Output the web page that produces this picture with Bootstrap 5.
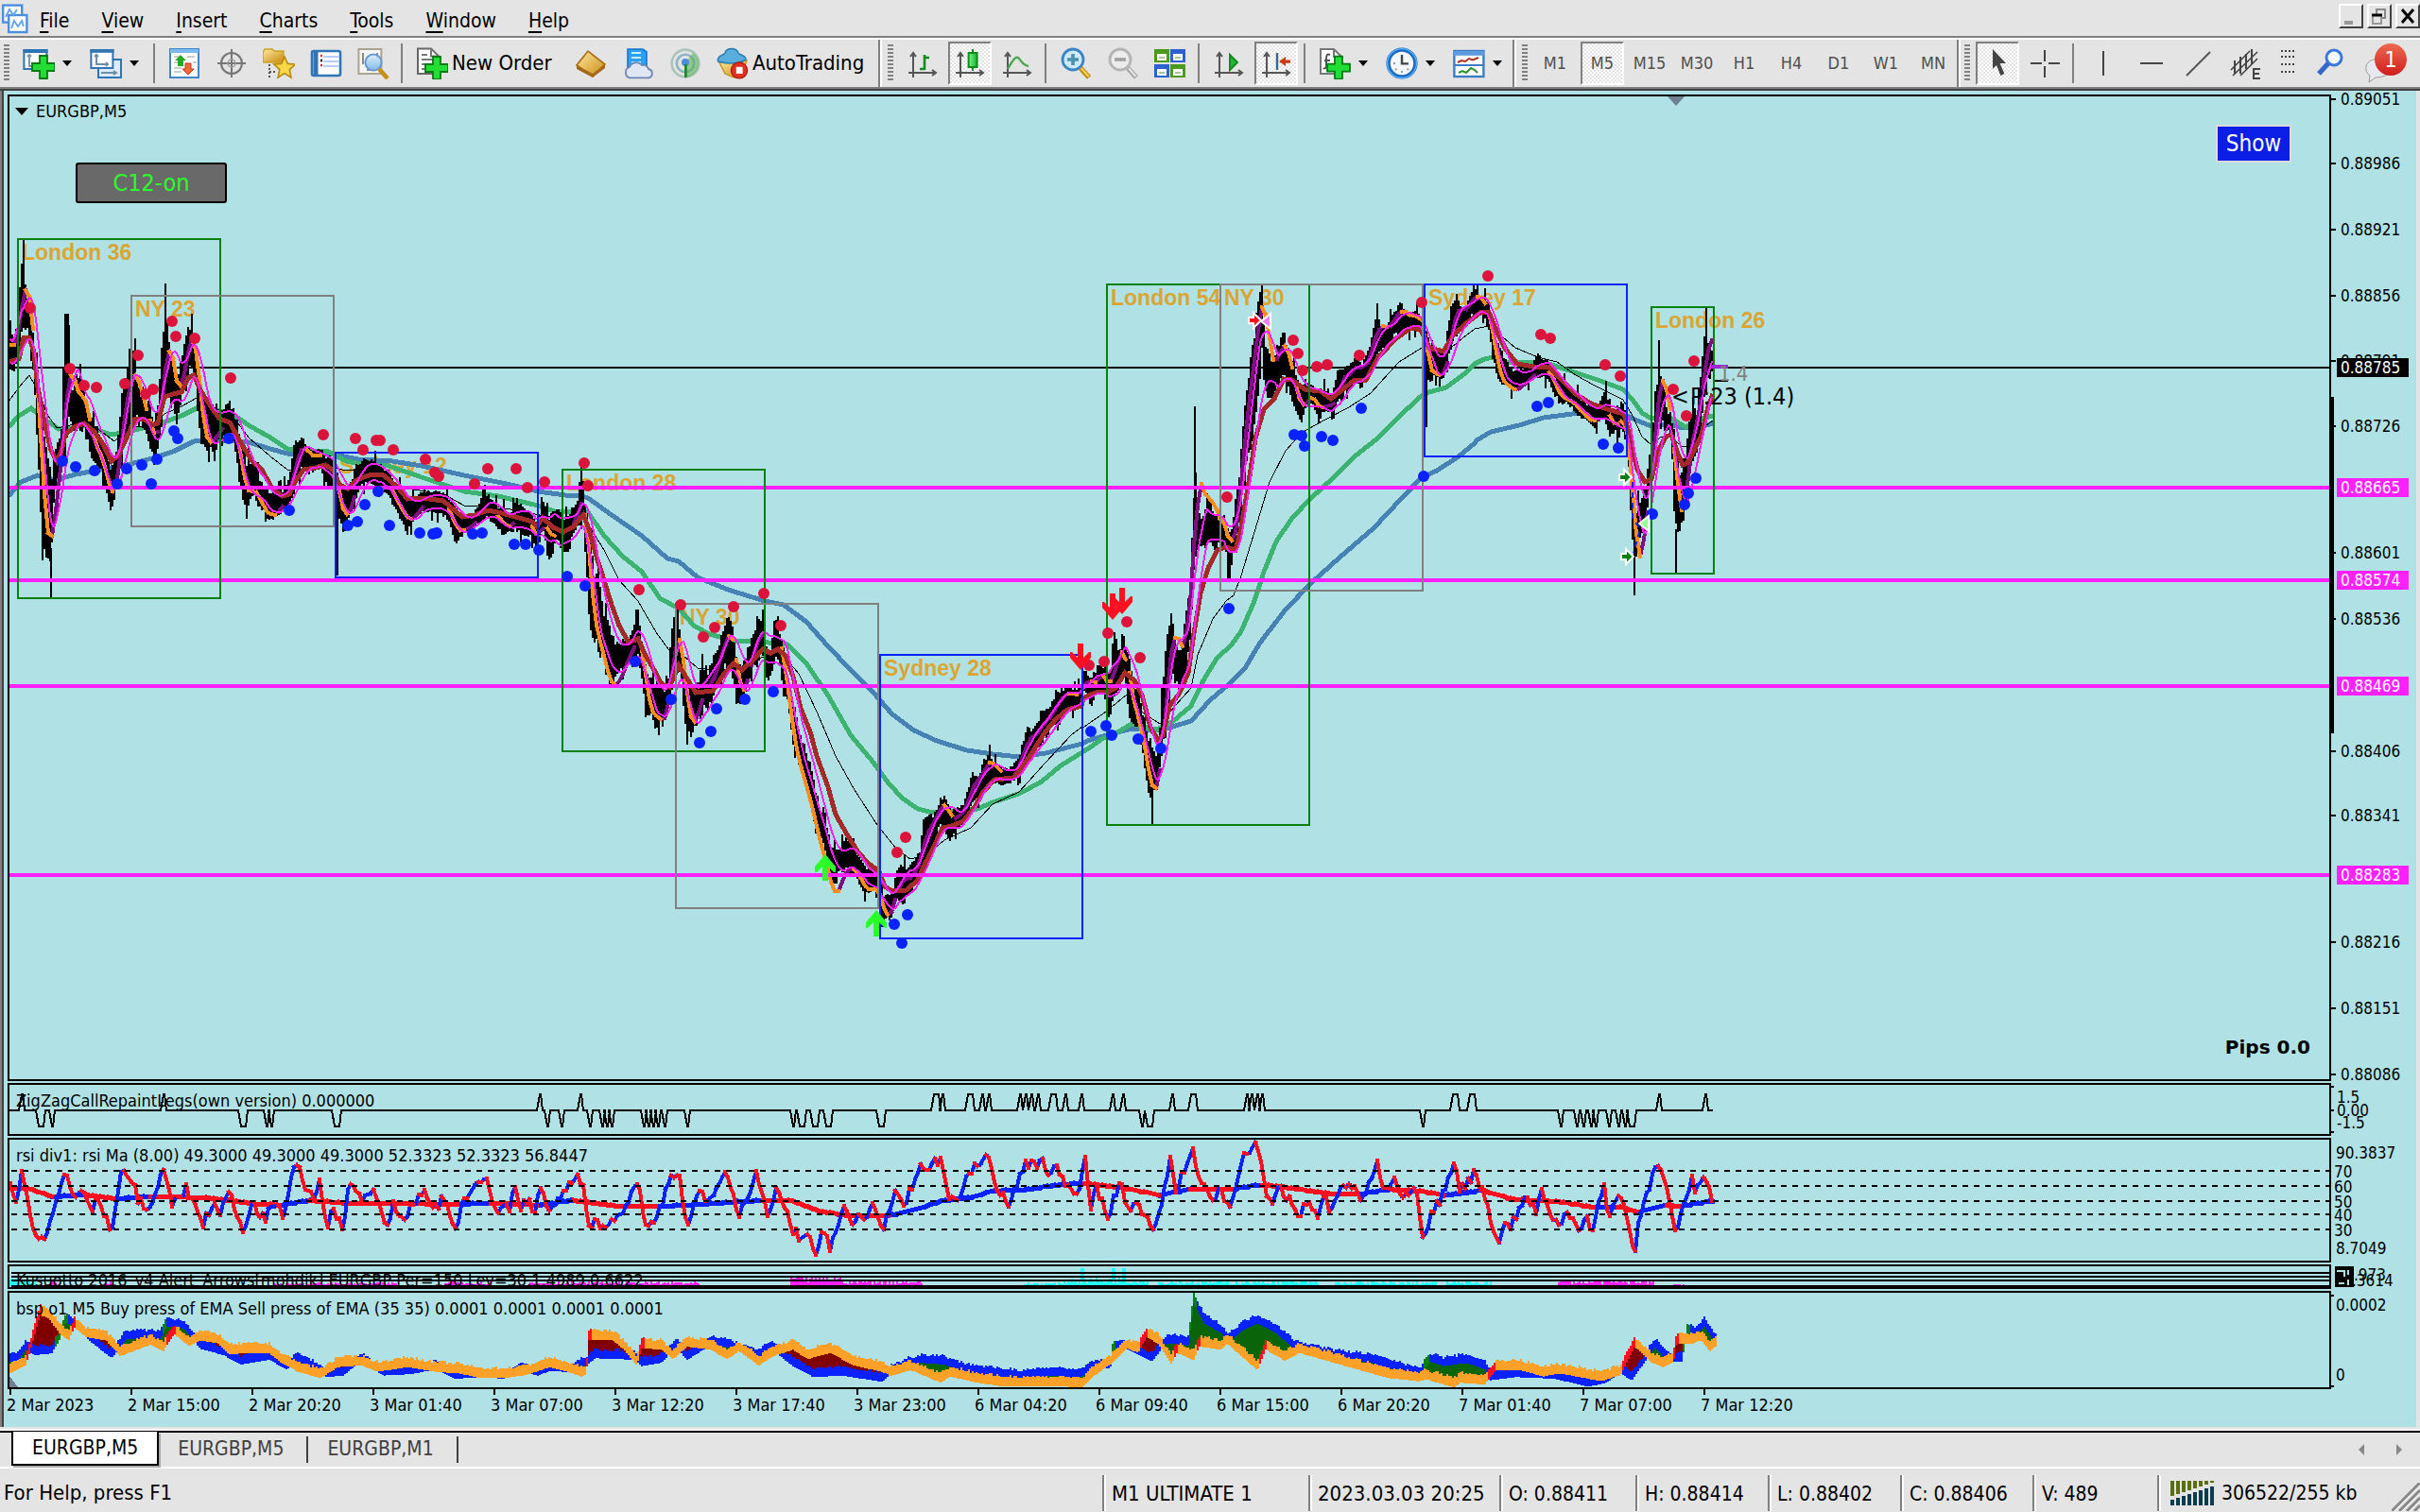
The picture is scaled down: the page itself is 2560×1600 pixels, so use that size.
<!DOCTYPE html>
<html lang="en">
<head>
<meta charset="utf-8">
<meta name="viewport" content="width=device-width, initial-scale=1">
<title>EURGBP,M5</title>
<link href="https://cdn.jsdelivr.net/npm/bootstrap@5.3.0/dist/css/bootstrap.min.css" rel="stylesheet">
<style>
:root{--face:#e4e4e4;--teal:#b0e2e5;--shade:#808080}
body{font-family:"DejaVu Sans Condensed","DejaVu Sans",sans-serif;font-size:21px;line-height:26px;color:#000;background:var(--face);overflow-x:hidden}
button{font:inherit;color:inherit;background:none;border:0;padding:0}
.menubar{height:40px;border-bottom:2px solid var(--shade)}
.menubar a{color:#000;text-decoration:none;padding:0 17px;line-height:44px}
.menubar a span{text-decoration:underline;text-underline-offset:4px;text-decoration-thickness:2px}
.appicon{margin-right:-5px}
.winbtn{width:26px;height:26px;border:2px solid;border-color:#fff #404040 #404040 #fff}
.toolbar{height:56px;border-top:2px solid #fff;border-bottom:2px solid #404040;box-shadow:inset 0 -2px var(--shade);padding-bottom:2px}
.band{border-right:2px solid var(--shade);box-shadow:2px 0 #fff;padding-left:6px;margin-right:2px}
.band:first-child{padding-left:4px}
.grip{width:6px;height:40px;margin-right:6px;background:repeating-linear-gradient(var(--shade) 0 2px,transparent 2px 4px)}
.tsep{width:2px;height:42px;margin:0 6px 0 4px;background:var(--shade)}
.tb{width:50px;height:46px;flex:none;display:flex;align-items:center;justify-content:center}
.tb svg{width:34px;height:34px}
.tb-menu{width:71px;justify-content:flex-start;padding-left:8px;gap:8px}
.tb-menu::after{content:"";border:5px solid transparent;border-top:6px solid #000;border-bottom:0}
.tb-text{width:auto;justify-content:flex-start;padding-left:8px;gap:4px;font-size:22px}
.tb-new{width:168px}.tb-auto{width:179px}
.tb-narrow{width:40px}
.tb-note{width:66px}.tb-note svg{width:50px;height:44px}
.tf{font-size:18px;color:#505050}
.pressed{width:46px;margin:0 2px;border:2px solid;border-color:var(--shade) #fff #fff var(--shade);background:repeating-conic-gradient(#fff 0 25%,#e4e4e4 0 50%) 0 0/4px 4px}
.chart{background:var(--teal);border-left:2px solid #404040;box-shadow:-2px 0 var(--shade);margin:0 4px 0 2px;padding:4px 0 0 4px}
.pane{margin-bottom:2px}
.plot{border:2px solid #000;min-width:0;position:relative}
.axis{width:90px;flex:none}
.pane-main{min-height:1044px}.pane-zz{height:56px}.pane-rsi{height:132px}.pane-ku{height:26px}.pane-bsp{height:104px;margin-bottom:0}.pane-time{height:40px;margin-left:-4px}
.plot svg,.axis svg,.pane-time svg{display:block;flex:1 1 0;min-width:0;width:100%;overflow:hidden}
.axis svg{overflow:visible}
.chart text{font-size:18px;fill:#000}
.axis text{font-size:17px}
.chart text.sess{font-family:"Liberation Sans",sans-serif;font-weight:700;font-size:23px;fill:#daa533}
.chart text.pips{font-family:"DejaVu Sans",sans-serif;font-weight:700;font-size:20px}
.chart text.tag{fill:#fff}
.chart text.note-s{font-size:22px;fill:#808080}.chart text.note-l{font-size:25px}
.btn-c12{position:absolute;left:70px;top:70px;width:160px;height:43px;background:#696969;border:2px solid #000;border-radius:3px;color:#2aff2a;font-size:25px}
.btn-show{position:absolute;right:40px;top:30px;width:80px;height:40px;background:#0a1ee6;border:2px solid #dcdcdc;color:#fff;font-size:24px}
.tabs{border-top:2px solid #000;box-shadow:0 -2px #fff;margin-top:4px;height:38px;padding-left:12px}
.tab{color:#404040;text-decoration:none;line-height:34px;height:34px;padding:0 20px;position:relative}
.tab+.tab{border-right:2px solid #404040;height:28px;margin-top:4px;line-height:26px;padding:0 24px 0 20px}
.tab-on{color:#000;background:#fff;border:2px solid #000;border-top:0;height:36px;margin-top:-1px;line-height:34px;box-shadow:2px 2px #aaa}
.scrolls{gap:34px;padding-right:19px}
.status{border-top:2px solid #fff;height:48px;padding-top:6px;font-size:22px}
.cell{border-left:2px solid var(--shade);box-shadow:inset 2px 0 #fff;padding-left:8px;height:38px;line-height:40px;flex:none;white-space:nowrap}
.w-a{width:218px}.w-b{width:202px}.w-c{width:144px}.w-d{width:140px}.w-e{width:132px}.w-f{width:278px}
.w-c,.w-d,.w-e,.w-f{font-size:21px}
</style>
<script src="https://cdn.jsdelivr.net/npm/bootstrap@5.3.0/dist/js/bootstrap.bundle.min.js"></script>
</head>
<body class="d-flex flex-column min-vh-100">
<svg width="0" height="0" class="position-absolute">
<defs>
<linearGradient id="gy" x1="0" y1="0" x2="1" y2="1"><stop offset="0" stop-color="#ffe9a0"/><stop offset="1" stop-color="#c98a10"/></linearGradient>
<linearGradient id="gb" x1="0" y1="0" x2="0" y2="1"><stop offset="0" stop-color="#d8efff"/><stop offset="1" stop-color="#6eb0e6"/></linearGradient>
<linearGradient id="gr" x1="0" y1="0" x2="0" y2="1"><stop offset="0" stop-color="#ee6a50"/><stop offset="1" stop-color="#d01c1c"/></linearGradient>
<linearGradient id="gg" x1="0" y1="0" x2="1" y2="0"><stop offset="0" stop-color="#7cf78c"/><stop offset="1" stop-color="#14b428"/></linearGradient>
<path id="plus" d="M4 0h4v4h4v4H8v4H4V8H0V4h4z" fill="#22dd33" stroke="#067a10" stroke-width=".9"/>
<g id="axes" fill="none" stroke="#555"><path d="M3.5 3v13M1 13.5h14M2 5l1.500-2L5 5M13.500 12l2 1.500-2 1.500"/></g>
</defs>
</svg>

<header>
<nav class="menubar d-flex align-items-start" aria-label="Main menu">
<svg width="30" height="32" viewBox="0 0 15 16" class="mt-1 appicon"><g fill="#fff" stroke="#4c8fe0" stroke-width="1.200"><rect x="1.600" y=".8" width="10" height="9"/><rect x="4.600" y="6" width="9.600" height="9"/></g><path d="M3 7l2-4 2 3 2-3M6 13l1.500-4 2 3 2-3 1 3" fill="none" stroke="#6aa5ea"/></svg>
<a href="#"><span>F</span>ile</a><a href="#"><span>V</span>iew</a><a href="#"><span>I</span>nsert</a><a href="#"><span>C</span>harts</a><a href="#"><span>T</span>ools</a><a href="#"><span>W</span>indow</a><a href="#"><span>H</span>elp</a>
<div class="ms-auto d-flex gap-1 mt-1">
<button class="winbtn d-flex" aria-label="Minimize"><svg width="22" height="22"><path d="M4 18h9" stroke="#999" stroke-width="4"/></svg></button>
<button class="winbtn d-flex" aria-label="Restore"><svg width="22" height="22" fill="none"><path d="M8 9V4h9v9h-4" stroke="#888" stroke-width="2"/><path d="M4 10h10M4 10v9h9v-9" stroke="#999" stroke-width="2"/><path d="M3 10h11" stroke="#000" stroke-width="3"/></svg></button>
<button class="winbtn d-flex" aria-label="Close"><svg width="22" height="22"><path d="M5 4l12 14M17 4L5 18" stroke="#000" stroke-width="3"/></svg></button>
</div>
</nav>
<div class="toolbar d-flex" role="toolbar" aria-label="Toolbar">
<div class="band d-flex align-items-center">
<span class="grip"></span>
<button class="tb tb-menu" aria-label="New chart"><svg viewBox="0 0 17 17"><rect x=".7" y="1.500" width="12" height="10" fill="#fff" stroke="#2f74b5"/><path d="M.3 2h13" stroke="#2f74b5" stroke-width="2"/><path d="M3.500 4v6h3M2.500 5l1-1 1 1" stroke="#7a96b0" fill="none"/><use href="#plus" transform="translate(5 4.500)"/></svg></button>
<button class="tb tb-menu" aria-label="Profiles"><svg viewBox="0 0 17 17"><rect x="4.500" y="6.500" width="12" height="9.500" fill="#dcecfa" stroke="#2f74b5"/><rect x=".7" y="1.500" width="11.500" height="9.500" fill="#fff" stroke="#2f74b5"/><path d="M.3 2h12.500" stroke="#2f74b5" stroke-width="1.800"/><path d="M3.500 4v5h6M2.500 5l1-1 1 1M8.500 8l1 1-1 1M6 13.500h8M12.500 12.500l1.500 1-1.500 1" stroke="#6f8ea8" fill="none"/></svg></button>
<span class="tsep"></span>
<button class="tb" aria-label="Market Watch"><svg viewBox="0 0 17 17"><rect x="1" y="1" width="15" height="15" fill="#fff" stroke="#3f86cc"/><path d="M1 2h15" stroke="#7db8ee" stroke-width="2"/><path d="M3 5h4M3 8h3M10 5h4M3 11h4M3 13h4M13 8h2" stroke="#ccc"/><path d="M6.500 4l3 3H8v3H5V7H3.500z" fill="#28a828"/><path d="M10.500 14.500l3-3H12v-3H9v3H7.500z" fill="#f06a40" stroke="#c03810" stroke-width=".5"/></svg></button>
<button class="tb" aria-label="Data window"><svg viewBox="0 0 17 17" fill="none" stroke="#777"><circle cx="8.500" cy="8.500" r="5.500" stroke-width="1.100"/><path d="M8.500 1v15M1 8.500h15" stroke-width="1"/><circle cx="8.500" cy="8.500" r="2" stroke="#999" stroke-width=".7"/></svg></button>
<button class="tb" aria-label="Navigator"><svg viewBox="0 0 17 17"><path d="M0 3l1-2h4l1 1h5v6H0z" fill="url(#gy)" stroke="#c9a224" stroke-width=".7"/><path d="M3.500 9v7M3.500 13h3" stroke="#555" stroke-dasharray="1 1"/><path d="M11.500 5l1.700 3.700 4 .3-3 2.800.8 4.200-3.500-2.200L8 16l.9-4.200-3-2.800 4-.3z" fill="#f8d84a" stroke="#b98a10" stroke-width=".8"/></svg></button>
<button class="tb" aria-label="Terminal"><svg viewBox="0 0 17 17"><rect x="1" y="2" width="15" height="13" rx="1" fill="#fff" stroke="#2f74b5" stroke-width="1.300"/><path d="M3 2.500v12" stroke="#2f74b5" stroke-width="2.500"/><path d="M7 5h8M7 7.500h8M7 10h8" stroke="#b8ccff" stroke-width="1"/><path d="M5.500 4.500h1M5.500 9.500h1" stroke="#e22" stroke-width="1.200"/><path d="M5.500 7h1" stroke="#000" stroke-width="1.200"/></svg></button>
<button class="tb" aria-label="Strategy tester"><svg viewBox="0 0 17 17"><path d="M.7 1h12v13H.7z" fill="#f6f6f2" stroke="#aaa490"/><path d="M3 3v6M10.500 3v3M5 12h5" stroke="#888"/><circle cx="8.500" cy="8" r="4.300" fill="url(#gb)" fill-opacity=".85" stroke="#6a9ad0"/><path d="M11.500 11.500l4.500 5" stroke="#c49018" stroke-width="2.300"/></svg></button>
<span class="tsep"></span>
<button class="tb tb-text tb-new"><svg viewBox="0 0 17 17"><path d="M1 .7h7l4 4V14H1z" fill="#fff" stroke="#666"/><path d="M8 .7v4h4M3 4h3M3 6.500h6M3 9h5M3 11.500h3" fill="none" stroke="#777"/><use href="#plus" transform="translate(5 5)"/></svg>New Order</button>
<button class="tb" aria-label="MetaEditor"><svg viewBox="0 0 17 17"><path d="M1 9.500L7 2l9 7-6.500 6.500z" fill="url(#gy)" stroke="#a86a10" stroke-width=".8"/><path d="M1 9.500l8.500 4.500L16 9v2l-6.500 5L1 11.500z" fill="#a5691a"/></svg></button>
<button class="tb" aria-label="Cloud"><svg viewBox="0 0 17 17"><path d="M3 1h8l2 1.500V11H3z" fill="#2ca0f4" stroke="#1676cc" stroke-width=".8"/><path d="M5 3h5M5 5.500h5M5 8h5" stroke="#c8ecff"/><path d="M4 16.200a3 3 0 010-5.700 3.800 3.800 0 016.500-1 3 3 0 013.500 2 2.400 2.400 0 010 4.700z" fill="#dfe6f4" stroke="#6f86b4" stroke-width=".9"/></svg></button>
<button class="tb" aria-label="Signals"><svg viewBox="0 0 17 17" fill="none"><circle cx="8.500" cy="8.500" r="7.200" stroke="#a9c4b8" stroke-width="1.300"/><circle cx="8.500" cy="8.500" r="4.600" stroke="#8fb4c8" stroke-width="1.300"/><path d="M8.500 8.500V16a7.500 7.500 0 007-7.500 7 7 0 00-3-5.500z" fill="#5ab45a" fill-opacity=".6"/><circle cx="8.500" cy="8" r="2" fill="#4c8cd8"/><path d="M8.700 9v7" stroke="#1c8a2c" stroke-width="1.400"/></svg></button>
<button class="tb tb-text tb-auto"><svg viewBox="0 0 17 17"><path d="M1 7h15l-3 7.500-4 1.500-4.500-2z" fill="url(#gy)" stroke="#c79a20" stroke-width=".8"/><path d="M.8 7.500C0 4 4 4.500 4.500 3c.8-3 6-3 7 0 .5 1.200 4 1 4 3.500-4 2.500-10 2.500-14.700 1z" fill="#5aaede" stroke="#2c7eb0" stroke-width=".8"/><circle cx="12" cy="12.200" r="4.300" fill="#e03020" stroke="#b01810" stroke-width=".6"/><rect x="10.400" y="10.400" width="3.400" height="3.600" fill="#fff"/></svg>AutoTrading</button>
</div>
<div class="band d-flex align-items-center">
<span class="grip"></span>
<button class="tb" aria-label="Bar chart"><svg viewBox="0 0 17 17"><use href="#axes"/><path d="M9.500 4v8M7 11.500h2.500M9.500 5.500H12" stroke="#128a1c" stroke-width="1.300" fill="none"/></svg></button>
<button class="tb pressed" aria-label="Candlesticks"><svg viewBox="0 0 17 17"><use href="#axes"/><path d="M10 1v11.500" stroke="#128a1c"/><rect x="7.800" y="3" width="4.500" height="7.500" fill="url(#gg)" stroke="#128a1c"/></svg></button>
<button class="tb" aria-label="Line chart"><svg viewBox="0 0 17 17"><use href="#axes"/><path d="M3.500 11.500C6 7 8 4 9.500 6c1.500 2 2.500 3.500 5 4" stroke="#4ca852" stroke-width="1.200" fill="none"/></svg></button>
<span class="tsep"></span>
<button class="tb" aria-label="Zoom in"><svg viewBox="0 0 17 17"><circle cx="7" cy="6.500" r="5.500" fill="#cdeafa" stroke="#3c84c8" stroke-width="1.400"/><path d="M7 3.500v6M4 6.500h6" stroke="#4c90b4" stroke-width="1.800"/><path d="M11 11l4.500 5" stroke="#c49018" stroke-width="2.800"/><path d="M11.500 11.200l3.800 4.200" stroke="#f4d860" stroke-width="1"/></svg></button>
<button class="tb" aria-label="Zoom out"><svg viewBox="0 0 17 17"><circle cx="7" cy="6.500" r="5.500" fill="#ececec" stroke="#b4b4b4" stroke-width="1.400"/><path d="M4 6.500h6" stroke="#a0a0a0" stroke-width="1.800"/><path d="M11 11l4.500 5" stroke="#a8a8a8" stroke-width="2.600"/><path d="M11.500 11.200l3.800 4.200" stroke="#e8e8e8" stroke-width="1"/></svg></button>
<button class="tb" aria-label="Tile windows"><svg viewBox="0 0 17 17"><path d="M0 1h8v7H0zM8.500 9h8v7h-8z" fill="#4c9a1c"/><path d="M8.500 1h8v7h-8zM0 9h8v7H0z" fill="#2c62d0"/><path d="M1.500 3.500h5v3.500h-5zM10 3.500h5v3.500h-5zM1.500 11.500h5V15h-5zM10 11.500h5V15h-5z" fill="#fff"/><path d="M2.500 5.500h3M11 5.500h3M2.500 13.500h3M11 13.500h3" stroke="#a8c0a0"/></svg></button>
<span class="tsep"></span>
<button class="tb" aria-label="Auto scroll"><svg viewBox="0 0 17 17"><use href="#axes"/><path d="M9 4l4 4-4 4z" fill="#22b832" stroke="#128a1c"/></svg></button>
<button class="tb pressed" aria-label="Chart shift"><svg viewBox="0 0 17 17"><use href="#axes"/><path d="M9 3v9" stroke="#2c6c9c" stroke-width="1.200"/><path d="M10 7.500l3.500-2.500v1.700H16v1.700h-2.500V10z" fill="#c83c14"/></svg></button>
<span class="tsep"></span>
<button class="tb tb-menu" aria-label="Indicators"><svg viewBox="0 0 17 17"><path d="M1 1h7l4 4v9H1z" fill="#fff" stroke="#777"/><path d="M8 1v4h4" fill="none" stroke="#777"/><path d="M6 4c-2-1-2 1-2 3v3c0 1-1 1.500-1.500 1M3 7h3" stroke="#555" fill="none"/><use href="#plus" transform="translate(4.500 4.800)"/></svg></button>
<button class="tb tb-menu" aria-label="Periods"><svg viewBox="0 0 17 17"><circle cx="8.500" cy="8.500" r="7.200" fill="#f4f8fc" stroke="#1c6cc4" stroke-width="2.200"/><circle cx="8.500" cy="8.500" r="7.700" fill="none" stroke="#58b0f4" stroke-width=".7"/><path d="M8.500 4v4.700H12" stroke="#444" fill="none" stroke-width="1.200"/><path d="M8.500 12.500v1M4 8.500h1M5 12l.7-.7M12 12l-.7-.7" stroke="#999"/></svg></button>
<button class="tb tb-menu" aria-label="Templates"><svg viewBox="0 0 17 17"><rect x=".7" y="2" width="15.500" height="13.500" fill="#fff" stroke="#3c7cc4" stroke-width="1.200"/><path d="M.5 3.200h16" stroke="#5c9ade" stroke-width="2.400"/><path d="M.7 9.500h15.500" stroke="#3c7cc4"/><path d="M2.500 8l2-1 2 .5 2-1.500 2 .7 3-1.200" stroke="#a83020" fill="none"/><path d="M3 13.500l2-1 2 1 2.500-2.500 2 1 1.500 1.500" stroke="#28922c" fill="none"/></svg></button>
</div>
<div class="band d-flex align-items-center">
<span class="grip me-1"></span>
<button class="tb tf">M1</button><button class="tb tf pressed">M5</button><button class="tb tf">M15</button><button class="tb tf">M30</button><button class="tb tf">H1</button><button class="tb tf">H4</button><button class="tb tf">D1</button><button class="tb tf">W1</button><button class="tb tf">MN</button>
</div>
<div class="d-flex align-items-center ps-1">
<span class="grip me-1"></span>
<button class="tb pressed" aria-label="Cursor"><svg viewBox="0 0 17 17"><path d="M6 1l7 7.500H9.800l2.400 5.500-2 1L8 9.500 6 11.500z" fill="#444"/></svg></button>
<button class="tb" aria-label="Crosshair"><svg viewBox="0 0 17 17"><path d="M8.500 1.500v6M8.500 10v6M1 8.500h6M10.500 8.500h6" stroke="#444"/></svg></button>
<span class="tsep"></span>
<button class="tb" aria-label="Vertical line"><svg viewBox="0 0 17 17"><path d="M8.500 2v13" stroke="#444"/></svg></button>
<button class="tb" aria-label="Horizontal line"><svg viewBox="0 0 17 17"><path d="M3 8.500h12" stroke="#444"/></svg></button>
<button class="tb" aria-label="Trendline"><svg viewBox="0 0 17 17"><path d="M2.500 15L15 2.500" stroke="#555"/></svg></button>
<button class="tb" aria-label="Equidistant channel"><svg viewBox="0 0 17 17" fill="none" stroke="#444"><path d="M1 12L11 2M2 15L15 2.500M6 15l9-9" stroke-width=".8"/><path d="M3 7v7M6 5v9M9 3.500v8M12 1v8" stroke-width="1"/><path d="M16.500 11.500H13v5h3.500M13 14h3"/></svg></button>
<button class="tb tb-narrow" aria-label="Fibonacci"><svg viewBox="0 0 17 17"><path d="M5 2h7M5 5h7M5 9h7M5 13h7" stroke="#444" stroke-dasharray="1 1"/></svg></button>
<button class="tb" aria-label="Search"><svg viewBox="0 0 17 17"><circle cx="10.500" cy="5.500" r="4" fill="#f4f8ff" stroke="#3c78d8" stroke-width="1.500"/><path d="M7.500 8.500L2.500 14" stroke="#3468c8" stroke-width="2.600"/></svg></button>
<button class="tb tb-note" aria-label="1 notification"><svg viewBox="0 0 50 44"><path d="M14 18c-10 1-12 12-5 17l-1 7 7-5c9 0 16-4 16-10 0-8-9-10-17-9z" fill="#e8e8f0" stroke="#999"/><circle cx="31" cy="18" r="17" fill="url(#gr)"/><text x="31" y="26" text-anchor="middle" fill="#fff" font-size="23">1</text></svg></button>
</div>
</div>
</header>

<main class="chart flex-grow-1 d-flex flex-column">
<section class="pane pane-main d-flex flex-grow-1">
<div class="plot d-flex flex-grow-1"><svg id="main"></svg><button class="btn-c12">C12-on</button><button class="btn-show">Show</button></div>
<div class="axis d-flex"><svg id="ax1"></svg></div>
</section>
<section class="pane pane-zz d-flex"><div class="plot d-flex flex-grow-1"><svg id="zz"></svg></div><div class="axis d-flex"><svg id="ax2"></svg></div></section>
<section class="pane pane-rsi d-flex"><div class="plot d-flex flex-grow-1"><svg id="rsi"></svg></div><div class="axis d-flex"><svg id="ax3"></svg></div></section>
<section class="pane pane-ku d-flex"><div class="plot d-flex flex-grow-1"><svg id="ku"></svg></div><div class="axis d-flex"><svg id="ax4"></svg></div></section>
<section class="pane pane-bsp d-flex"><div class="plot d-flex flex-grow-1"><svg id="bsp"></svg></div><div class="axis d-flex"><svg id="ax5"></svg></div></section>
<div class="pane-time d-flex"><svg id="time"></svg></div>
</main>

<nav class="tabs d-flex" aria-label="Charts">
<a href="#" class="tab tab-on">EURGBP,M5</a><a href="#" class="tab">EURGBP,M5</a><a href="#" class="tab">EURGBP,M1</a>
<div class="ms-auto d-flex align-items-center scrolls"><button aria-label="Scroll left" class="d-flex"><svg width="6" height="12"><path d="M6 0v12L0 6z" fill="#888"/></svg></button><button aria-label="Scroll right" class="d-flex"><svg width="6" height="12"><path d="M0 0v12l6-6z" fill="#888"/></svg></button></div>
</nav>
<footer class="status d-flex align-items-center">
<span class="flex-grow-1 ps-1">For Help, press F1</span>
<span class="cell w-a">M1 ULTIMATE 1</span><span class="cell w-b">2023.03.03 20:25</span><span class="cell w-c">O: 0.88411</span><span class="cell w-d">H: 0.88414</span><span class="cell w-d">L: 0.88402</span><span class="cell w-d">C: 0.88406</span><span class="cell w-e">V: 489</span>
<span class="cell w-f d-flex align-items-center"><svg width="46" height="26" class="ms-1 me-2" id="conn"></svg>306522/255 kb<svg width="30" height="30" class="ms-auto align-self-end"><path d="M0 30L30 0M8 30L30 8M16 30l14-14M24 30l6-6" stroke="#888" stroke-width="3"/><path d="M3 30L30 3M11 30l19-19M19 30l11-11" stroke="#fff" stroke-width="1"/></svg></span>
</footer>

<script>
const NS='http://www.w3.org/2000/svg';
let seed=7;const rnd=()=>(seed=(seed*16807)%2147483647)/2147483647;
// Each series is stored in blocks: origin and scale of the block, then its samples.
const V={A:[0,230,2.24,3],B:[560,440,2.529,2.751],C:[1100,280,3,2.613],D:[1480,280,3,3],E:[0,1140,1.6505,3],F:[940,1140,1.704,3]};
function pts(blocks,n=2){const out=[];for(const [k,s] of blocks){const [ox,oy,sx,sy]=V[k];for(const p of s.split(';')){const a=p.split(',').map(Number);const r=[ox+a[0]/sx];for(let i=1;i<n;i++)r.push(oy+a[i]/sy);out.push(r)}}return out.sort((a,b)=>a[0]-b[0])}
function at(p,x,i=1){if(x<=p[0][0])return p[0][i];for(let k=1;k<p.length;k++)if(x<=p[k][0]){const a=p[k-1],b=p[k];return a[i]+(b[i]-a[i])*(x-a[0])/((b[0]-a[0])||1)}return p[p.length-1][i]}
const P=p=>p.map((q,i)=>(i?'L':'M')+Math.round(q[0])+' '+Math.round(q[1])).join('');
const line=(d,c,w,x='')=>`<path d="${d}" fill="none" stroke="${c}" stroke-width="${w}" ${x}/>`;
const txt=(x,y,s,c='')=>`<text x="${x}" y="${y}" class="${c}">${s}</text>`;
function put(id,ox,oy,html){const g=document.createElementNS(NS,'g');g.setAttribute('transform',`translate(${-ox} ${-oy})`);g.innerHTML=html;document.getElementById(id).append(g)}

const price=pts([['A','20,350,470;35,400,480;45,230,450;55,75,380;60,200,330;70,290,400;80,380,520;90,500,740;100,640,1080;112,760,1070;122,820,1090;130,740,850;145,700,780;155,330,760;163,330,690;175,590,670;190,470,670;200,560,680;215,640,750;235,680,790;250,730,860;262,790,930;270,780,900;280,700,790;290,530,760;305,460,690;320,420,640;330,560,640;345,590,670;355,590,720;365,650,780;375,600,720;385,380,640;392,270,560;400,400,560;410,430,620;420,520,650;430,430,600;440,380,520;455,320,470;462,420,500;470,500,660;480,570,740;495,610,740;510,590,740;520,620,700;545,590,690;555,620,720;570,680,880;585,770,920;600,770,870;615,830,920;630,850,940;640,880,960;655,880,940;670,870,930;685,840,900;700,700,860;715,700,800;730,740,810;760,740,790;775,770,850;790,760,850;800,820,930;815,870,1000;830,840,930;845,790,880;860,770,840;880,770,840;900,790,860;920,810,870;935,840,930;950,870,950;965,890,1000;985,900,940;1005,870,930;1025,880,930;1040,870,930;1060,890,950;1080,930,1030;1100,950,1000;1120,950,980;1140,900,960;1155,880,950;1175,920,970;1190,930,1000;1210,950,990;1225,900,990;1240,930,1000;1260,940,1010;1275,990,1060;1285,880,970;1300,960,1090;1320,920,1030;1340,960,1060;1355,930,1010;1370,900,980'],
['B','141,190,290;145,200,290;150,260,420;160,330,600;170,420,640;185,480,680;200,560,730;215,620,780;225,650,780;240,670,740;255,650,730;270,650,700;280,600,720;290,550,700;300,640,750;310,730,870;325,760,860;340,780,900;355,800,900;370,790,860;380,600,800;390,590,740;400,600,740;410,680,800;420,760,960;435,800,920;450,780,890;465,720,860;480,740,860;495,700,800;510,660,790;525,600,730;540,590,730;555,720,840;570,740,840;580,690,800;595,650,740;612,580,720;625,600,690;635,660,770;645,690,760;657,560,710;668,640,700;680,660,810;690,750,820;700,820,920;710,850,980;725,930,1020;740,970,1080;755,1030,1130;770,1110,1200;785,1170,1230;800,1220,1290;810,1260,1380;825,1270,1320;840,1250,1320;850,1230,1320;865,1260,1330;880,1290,1350;900,1320,1390;920,1330,1370;935,1340,1380;945,1390,1500;960,1400,1440;975,1380,1420;985,1310,1400;1000,1310,1420;1015,1320,1390;1030,1300,1370;1045,1270,1330;1055,1180,1310;1070,1170,1280;1085,1160,1230;1100,1110,1190;1110,1110,1200;1125,1150,1230;1140,1150,1200;1160,1140,1180;1175,1090,1160;1185,1040,1130;1200,1060,1110;1215,1010,1080;1230,990,1060;1245,1020,1060;1265,1030,1070;1290,1030,1060;1310,1000,1040;1330,910,1000;1350,920,980;1370,860,950;1390,860,920;1410,800,890;1425,800,870;1440,790,850;1460,810,850;1478,790,840'],
['C','137,1130,1180;150,1130,1180;160,1150,1220;185,1110,1180;210,1120,1200;222,1140,1260;235,1000,1180;250,1080,1170;265,1010,1130;280,1070,1240;300,1180,1270;315,1180,1270;325,1220,1360;340,1290,1440;357,1330,1480;370,1370,1440;380,1280,1400;390,1160,1330;405,1020,1280;420,930,1160;430,1040,1150;445,1060,1180;455,1050,1150;465,930,1110;480,860,1040;487,600,900;495,610,800;505,690,770;520,700,780;540,640,760;555,700,780;575,700,770;590,700,790;600,750,895;615,700,790;630,590,760;640,500,660;655,330,600;675,230,480;690,120,380;705,60,260;715,230,350;730,250,370;745,260,370;755,220,330;775,190,290;790,240,350;800,270,370;815,320,400;830,340,430;845,320,390;865,340,380;885,350,430;900,350,400;915,350,400;930,360,430;945,300,370;965,290,350;985,280,340;1005,260,310;1020,280,340;1040,250,300;1055,200,280;1070,140,240;1090,180,230;1110,160,210;1130,130,190;1145,110,180;1165,140,180;1190,130,170;1210,150,180'],
['D','73,170,210;84,260,340;100,280,370;115,280,340;130,290,380;145,280,340;155,200,300;170,110,240;182,100,220;195,140,200;215,130,180;235,70,160;250,100,150;270,110,150;288,130,230;300,200,310;315,250,380;330,290,370;345,310,390;360,340,390;380,340,390;400,330,370;420,330,360;440,290,350;460,310,350;475,310,360;490,340,400;510,370,440;530,390,430;550,400,450;575,430,480;600,450,490;620,460,510;640,440,480;655,400,490;670,470,540;690,460,520;708,440,510;720,480,560;730,530,640;740,580,900;747,800,1000;757,760,900;770,740,850;785,690,790;795,610,720;805,530,650;815,380,560;825,330,500;835,330,520;850,470,520;865,480,530;872,520,820;880,600,850;890,650,830;905,620,800;915,560,680;930,420,620;945,470,590;955,400,540;965,230,480;975,210,400;985,280,360;992,280,340']],3);
const brown=pts([['A','20,460;45,450;55,380;70,380;80,430;90,540;105,650;120,740;135,775;145,740;155,690;175,665;200,655;225,680;245,720;265,775;280,755;300,700;320,640;340,640;360,660;375,655;390,570;410,560;430,555;445,510;460,500;475,550;495,590;520,640;545,650;570,710;595,770;620,800;645,860;670,885;685,880;700,840;720,800;745,795;770,785;790,805;805,850;825,860;845,835;880,815;910,820;940,855;965,895;1000,890;1050,900;1095,950;1125,945;1155,930;1190,940;1230,955;1260,965;1272,980;1285,955;1310,985;1335,1000;1360,980;1383,945'],
['B','146,295;160,330;180,410;200,480;220,550;240,610;265,660;290,650;310,700;335,740;355,780;375,790;400,725;425,770;445,805;490,800;520,750;545,720;570,740;600,710;625,680;645,690;665,680;685,700;705,760;725,850;750,920;770,990;800,1080;820,1160;850,1220;880,1270;905,1300;935,1325;950,1370;970,1385;1010,1380;1040,1350;1060,1300;1080,1260;1105,1200;1130,1195;1160,1180;1190,1140;1215,1095;1245,1060;1295,1055;1320,1020;1350,970;1380,920;1410,880;1440,855;1476,845'],
['C','137,1200;160,1190;190,1180;215,1180;240,1170;270,1130;300,1150;325,1190;350,1280;375,1315;390,1300;410,1220;440,1190;470,1130;490,1020;510,910;535,840;565,790;590,780;620,790;635,740;660,620;685,480;710,400;745,370;775,315;800,320;840,345;890,350;925,370;955,350;1000,320;1035,320;1075,255;1130,205;1180,175;1210,180'],
['D','85,240;95,265;140,275;170,225;210,190;260,150;285,150;310,210;340,270;375,315;430,325;475,325;510,360;560,410;610,440;660,460;715,475;735,560;755,650;780,690;800,680;820,600;845,545;865,540;885,600;900,635;915,630;935,590;960,540;980,450;995,410']]);
const green=pts([['A','20,665;45,630;75,605;100,635;140,672;170,670;200,660;230,675;265,690;320,675;380,655;430,630;465,605;500,610;550,625;590,660;640,700;680,735;740,740;780,745;820,775;870,785;920,790;1000,825;1100,870;1180,885;1275,915;1320,935;1375,932'],
['B','158,280;200,350;250,410;300,455;350,530;400,560;440,610;480,635;550,655;640,660;690,665;740,720;800,815;860,930;920,1010;960,1070;1000,1115;1040,1145;1080,1155;1200,1145;1240,1125;1310,1100;1370,1065;1420,1020;1500,965;1530,940'],
['C','190,1318;230,1300;290,1270;370,1285;420,1265;480,1220;520,1150;560,1090;610,1050;640,1015;680,930;710,850;750,765;800,700;860,645;930,590;1000,530;1070,480;1140,420;1200,370;1225,355;1290,340;1350,300;1380,275'],
['D','270,300;300,295;340,310;400,310;475,315;550,340;640,370;710,395;740,430;770,470;800,490;860,485;910,515;960,490;995,480']]);
const steel=pts([['A','20,885;50,840;90,820;130,835;180,815;240,800;300,785;360,765;410,745;460,712;520,708;590,715;640,735;680,750;780,750;850,768;930,775;1000,790;1100,820;1200,845;1275,870;1340,882;1380,885'],
['B','157,240;220,290;300,350;370,415;400,425;450,470;530,505;630,540;680,550;740,600;800,670;860,740;920,805;970,870;1030,915;1090,945;1170,975;1240,985;1310,992;1380,982;1450,962;1480,955'],
['C','150,1318;200,1305;290,1282;380,1288;480,1262;540,1205;600,1160;650,1115;700,1045;780,955;860,880;950,810;1060,730;1150,645;1210,590;1260,570;1330,530;1380,495'],
['D','245,557;290,530;380,510;460,485;550,475;620,470;710,475;740,490;800,512;860,508;900,520;950,515;995,505']]);
const slow=pts([['A','20,585;45,540;70,500;95,560;110,620;135,670;165,660;200,650;235,675;270,710;310,660;350,670;390,625;430,600;470,570;500,600;550,630;590,700;640,760;680,800;720,800;770,785;810,800;850,800;900,820;960,860;1010,870;1060,885;1100,915;1160,915;1220,930;1280,945;1330,955;1375,940'],
['B','155,310;200,390;240,480;290,540;340,630;380,690;410,695;450,735;500,740;560,735;620,705;680,700;720,750;770,860;820,990;870,1090;930,1190;980,1260;1020,1290;1060,1280;1110,1235;1180,1200;1240,1130;1310,1095;1380,1010;1450,930;1480,905'],
['C','140,1278;210,1235;275,1190;330,1240;380,1270;430,1220;480,1170;500,1080;550,980;590,930;615,915;640,860;680,740;730,600;780,515;830,465;900,430;980,395;1050,355;1140,270;1212,230;1290,240;1340,205'],
['D','240,205;285,195;330,230;370,265;440,295;500,310;560,350;620,385;710,430;740,480;770,545;800,572;830,545;860,545;900,580;940,570;975,510;995,495']]);
const reds=pts([['A','71,288;165,480;200,535;228,540;295,528;326,438;345,562;363,546;407,330;416,378;461,384;546,510;766,690;842,702;860,738;891,708;900,708;931,738;1007,768;1030,810;1040,822;1125,846;1156,798;1222,798;1250,858;1290,840;1384,780;1393,852;1514,1182'],['B','405,550;465,643;496,616;546,555;627,517;673,610;985,1270;1006,1226'],['C','155,1107;203,1097;215,1019;276,988;317,1087;593,643;803,209;818,245;833,293;880,282;912,277;1013,250;1211,104'],['D','282,36;449,222;480,234;653,318;703,354;869,396;912,480;935,306']]);
const blues=pts([['A','148,774;179,792;224,804;278,846;300,798;336,786;358,846;371,768;412,678;421,702;542,702;685,930;824,978;846,966;864,912;896,870;923,978;994,1002;1026,1006;1035,1002;1120,1006;1142,1002;1218,1038;1245,1038;1276,1056;1345,1140;1387,1170'],['B','283,715;379,826;455,951;485,918;501,853;577,826;652,803;975,1479;1012,1452;996,1536'],['C','162,1290;209,1275;229,1301;311,1311;384,1337;599,951;808,470;830,472;839,501;893,475;930,486;1019,398;1217,585'],['D','437,450;473,438;648,570;695,582;803,792;942,678;918,726;906,762']]);
const boxes=[['London 36',19,253,233,633,'#0a8010'],['NY 23',139,313,353,557,'#808080'],['Sydney 12',355,479,569,611,'#0a22ff'],['London 28',595,497,809,795,'#0a8010'],['NY 30',715,639,929,961,'#808080'],['Sydney 28',931,693,1145,993,'#0a22ff'],['London 54',1171,301,1385,873,'#0a8010'],['NY 30',1291,301,1505,625,'#808080'],['Sydney 17',1507,301,1721,483,'#0a22ff'],['London 26',1747,325,1813,607,'#0a8010']];

let m='<g shape-rendering="crispEdges">';
m+=boxes.map(b=>txt(b[1]+4,b[2]+22,b[0],'sess')).join('');
m+=line('M0 389H4000','#000',2);
m+=line(P(steel),'#4682b4',5)+line(P(green),'#3cb371',5);
// candles: one bar every two pixels
let bars='',mid=[];
for(let x=11;x<=1811;x+=2){const t=at(price,x,1),b=at(price,x,2),h=b-t;const q=rnd(),k=q<.35?0:.2;const ext=q<.08?10:0;const a=t-3-ext+h*k*rnd(),z=b+3+(q>.92?10:0)-h*k*rnd();bars+=`M${x} ${Math.round(a)}V${Math.round(z)}`;mid.push([x,(t+b)/2,h/2])}
bars+='M54 632V580M25 254V290M175 300V420M357 520V609M71 332V390M72 332V390M203 332V360M615 490V520M1219 873V830M1264 430V540M1335 301V330M1773 607V560M1805 325V400M1729 630V580M1509 350V452M1755 360V420M1711 440V472';
m+=line(bars,'#000',2);
const sm=(arr,w,f)=>arr.map((_,i)=>{let s=0,n=0;for(let j=Math.max(0,i-w);j<=i+1&&j<arr.length;j++){s+=f(arr[j]);n++}return [arr[i][0],s/n]});
m+=line(P(slow),'#000',1);
const fast=sm(mid,4,q=>q[1]+(q[1]-at(brown,q[0]))*.55);
let up='',dn='';
for(let i=2;i<fast.length;i+=2){const a=fast[i-2],b=fast[i];const s=`M${a[0]} ${Math.round(a[1])}L${b[0]} ${Math.round(b[1])}`;if(Math.abs(b[1]-at(brown,b[0]))<7)continue;if(b[1]<=a[1])up+=s;else dn+=s}
m+=line(up,'#7d0f80',4,'stroke-linecap="square"')+line(dn,'#ff8c1e',4,'stroke-linecap="square"');
m+=line(P(brown),'#a52a2a',5);
m+=line(P(sm(mid,7,q=>q[1]-q[2]*.75)),'#ff20ff',2)+line(P(sm(mid,7,q=>q[1]+q[2]*.75)),'#ff20ff',2);
for(const y of [516,614,726,926])m+=line(`M0 ${y}H4000`,'#ff20ff',4);
m+=boxes.map(b=>`<rect x="${b[1]}" y="${b[2]}" width="${b[3]-b[1]}" height="${b[4]-b[2]}" fill="none" stroke="${b[5]}" stroke-width="2"/>`).join('')+'</g>';
const dot=c=>p=>`<circle cx="${Math.round(p[0])}" cy="${Math.round(p[1])}" r="6" fill="${c}"/>`;
m+=reds.map(dot('#dc143c')).join('')+blues.map(dot('#0a22ff')).join('');
for(const [x,y] of [[873,918],[927,977]])m+=`<path d="M${x} ${y-14}l11 13v6h-2l-6-6v15h-6v-15l-6 6h-2v-6z" fill="#2aff2a"/>`;
for(const [x,y] of [[1143,695],[1177,642],[1187,636]])m+=`<path d="M${x} ${y+14}l11-13v-6h-2l-6 6v-15h-6v15l-6-6h-2v6z" fill="#ff1020"/>`;
const rt=(x,y,c)=>`<path d="M${x-6} ${y-3}h5v-5l8 8-8 8v-5h-5z" fill="${c}" stroke="#fff" stroke-width="2"/>`,lf=(x,y,c)=>`<path d="M${x+5} ${y-8}v16l-10-8z" fill="${c}" stroke="#fff" stroke-width="2"/>`;
m+=rt(1327,331,'#ff1020').replace(/331|328/g,s=>+s+8)+lf(1339,340,'#ee82ee')+rt(1719,505,'#0a8010')+rt(1721,589,'#0a8010')+lf(1739,554,'#98fb98');
m+=line('M1727 510V548L1735 560 1728 585','#0a22ff',2,'stroke-dasharray="6 5"');
m+=line('M1810 388H1828','#9a28d8',4)+line('M1814 403H1828','#000',2);
m+=txt(1818,403,'1.4','note-s')+txt(1768,428,'&lt;','note-l')+txt(1788,428,'P:23 (1.4)','note-l');
m+='<path d="M16 114h14l-7 8z"/><path d="M1764 102h18l-9 10z" fill="#708090"/>'+txt(38,124,'EURGBP,M5');
put('main',10,102,m);
const right=document.createElementNS(NS,'svg');right.setAttribute('x','100%');right.style.overflow='visible';right.innerHTML='<text x="-20" y="1013" text-anchor="end" class="pips">Pips 0.0</text>';document.getElementById('main').append(right);

let a='<path d="M2467 420V776" stroke="#000" stroke-width="4"/>';
for(const [y,s] of [[105,'0.89051'],[173,'0.88986'],[243,'0.88921'],[313,'0.88856'],[382,'0.88791'],[451,'0.88726'],[585,'0.88601'],[655,'0.88536'],[795,'0.88406'],[863,'0.88341'],[997,'0.88216'],[1067,'0.88151'],[1137,'0.88086']])a+=line(`M2466 ${y}h5`,'#000',2)+txt(2476,y+6,s);
for(const [y,s,c] of [[389,'0.88785','#000'],[516,'0.88665','#ff20ff'],[614,'0.88574','#ff20ff'],[726,'0.88469','#ff20ff'],[926,'0.88283','#ff20ff']])a+=`<rect x="2472" y="${y-10}" width="76" height="20" fill="${c}"/>`+txt(2476,y+6,s,'tag');
put('ax1',2466,100,a);

// leg markers: -1 goes up, +1 goes down
const spikes=[];const add=(k,dir,s)=>s.split(',').forEach(v=>{const w=v.endsWith('w');const [ox,,sx]=V[k];spikes.push([Math.round(ox+parseFloat(v)/sx),dir,w?4:0])});
add('E',-1,'38,286,943,1014');add('E',1,'71w,90,424w,466,474,587w,955,981,1030,1051,1060,1068,1124,1133,1140,1148,1160,1200,1384,1400w,1422w,1446w,1539w');
add('F',-1,'86w,97,146w,168,181,237,247,258,269,296w,318,348,404,422,511,549w,645,655,664,673,1020w,1052w,1388,1472');add('F',1,'456,470w,963,1211,1240,1252,1266,1274,1298,1315,1328,1340w');
spikes.sort((p,q)=>p[0]-q[0]);let zd='M10 1175';for(const [x,d,w] of spikes)zd+=`H${x-w/2-3}L${x-w/2} ${1175+d*17}h${w+1}L${x+w/2+3} 1175`;zd+='H1812';
put('zz',10,1148,line(zd,'#000',2,'shape-rendering="crispEdges"')+txt(17,1171,'ZigZagCallRepaintLegs(own version) 0.000000'));
put('ax2',2466,1146,txt(2472,1167,'1.5')+txt(2472,1181,'0.00')+txt(2472,1194,'-1.5')+line('M2466 1150h3M2466 1175h3M2466 1198h3','#000',2));

const rsi=pts([['E','17,330;28,400;40,285;48,400;62,500;78,505;90,460;100,380;115,285;130,400;138,350;160,430;170,390;195,485;212,300;228,310;240,380;262,430;285,285;300,400;325,350;352,470;372,410;385,435;400,350;410,430;424,500;442,405;460,450;480,410;495,435;505,350;512,270;524,275;530,370;548,375;558,335;572,470;578,410;600,480;605,380;618,335;635,390;655,360;678,480;688,385;700,465;720,400;740,350;755,420;775,385;797,490;805,410;830,355;848,310;865,430;880,405;890,430;898,335;910,415;922,375;932,450;943,330;960,440;975,380;1005,315;1018,325;1026,460;1060,475;1075,460;1090,410;1112,330;1130,480;1150,430;1172,310;1186,320;1200,465;1225,355;1235,400;1268,310;1290,430;1322,305;1342,450;1353,350;1368,390;1384,485;1402,520;1412,495;1424,555;1436,480;1450,550;1475,395;1490,470;1500,430;1512,460;1525,390;1540,500;1550,430'],['F','14,335;25,415;62,270;72,300;95,250;110,400;130,370;155,270;165,290;172,250;183,260;195,355;218,400;245,275;280,270;288,320;302,260;315,340;343,380;354,258;364,415;375,350;398,445;408,370;418,335;435,430;450,395;475,490;490,410;508,262;516,360;549,238;560,320;585,380;600,350;613,430;640,250;665,212;680,360;692,405;706,345;740,445;755,385;776,440;785,380;798,430;815,360;838,335;852,405;880,262;895,365;910,310;928,385;948,335;966,525;978,430;1000,370;1020,275;1030,365;1055,305;1080,400;1085,470;1098,530;1110,460;1120,480;1150,375;1168,430;1176,350;1195,440;1212,470;1225,430;1244,495;1258,445;1268,495;1280,390;1290,340;1298,445;1318,370;1330,430;1344,568;1355,430;1388,262;1405,370;1420,500;1435,400;1448,320;1456,370;1470,300;1485,390']]);
const rma=pts([['E','17,350;45,350;90,378;150,372;200,385;260,378;350,380;400,390;440,400;490,405;540,390;600,398;660,400;720,400;800,402;860,398;940,405;1000,390;1080,408;1150,408;1200,405;1280,395;1330,390;1380,390;1430,425;1480,438;1550,438'],['F','0,438;50,420;100,390;150,380;190,360;250,355;310,340;350,335;400,345;450,360;490,375;540,355;620,355;670,340;720,350;800,370;850,370;900,355;960,360;1000,375;1070,358;1120,385;1160,390;1200,392;1270,412;1320,410;1350,428;1400,405;1430,408;1485,392']]);
function twoTone(p,step,n,w){let u='',d='',py=at(p,11);for(let x=11+step;x<=1811;x+=step){const y=at(p,x)+(rnd()-.5)*n;const s=`M${x-step} ${Math.round(py)}L${x} ${Math.round(y)}`;if(y<py-.01)u+=s;else d+=s;py=y}return line(u,'#0a22ff',w,'stroke-linecap="square"')+line(d,'#ff1020',w,'stroke-linecap="square"')}
let r='<g shape-rendering="crispEdges">'+twoTone(rma,4,0,5)+twoTone(rsi,3,11,4);
for(const y of [1239,1255,1271,1285,1301])r+=line(`M12 ${y}H4000`,'#000',2,'stroke-dasharray="6 6"');
put('rsi',10,1206,r+'</g>'+txt(17,1229,'rsi div1: rsi Ma (8.00) 49.3000 49.3000 49.3000 52.3323 52.3323 56.8447'));
put('ax3',2466,1204,txt(2471,1226,'90.3837')+txt(2469,1246,'70')+txt(2469,1262,'60')+txt(2469,1278,'50')+txt(2469,1292,'40')+txt(2469,1308,'30')+txt(2471,1327,'8.7049'));

let k='<g shape-rendering="crispEdges">';
for(const [a1,b1,c,h] of [[10,40,'#20ffff',8],[50,60,'#ff20ff',5],[110,120,'#ff20ff',5],[290,420,'#ff20ff',4],[470,520,'#ff20ff',6],[560,740,'#ff20ff',5],[836,890,'#ff20ff',11],[890,975,'#ff20ff',7],[1083,1125,'#20ffff',4],[1125,1215,'#20ffff',9],[1225,1395,'#20ffff',6],[1412,1520,'#20ffff',5],[1530,1578,'#20ffff',6],[1648,1750,'#ff20ff',7],[1770,1782,'#ff20ff',3]])for(let x=a1;x<b1;x+=2){const hh=Math.round(h*(.3+rnd()*.7));k+=`<rect x="${x}" y="${1361-hh}" width="2" height="${hh}" fill="${c}"/>`}
k+='<path d="M1143 1342h4v12h-4zM1176 1342h4v12h-4zM1187 1342h4v12h-4z" fill="#20ffff"/>'+line('M12 1347H4000M12 1351H4000M12 1355H4000M12 1361H4000','#000',2)+'</g>';
put('ku',10,1340,k+txt(17,1361,'Kusuotto 2016_v4 Alert_Arrows[mohdik] EURGBP Per=150 Lev=30,1.4989,0.6622'));
put('ax4',2466,1338,txt(2490,1355,'.973')+txt(2488,1361,'.3614')+'<rect x="2470" y="1340" width="20" height="22"/>'+line('M2472 1345h8v6M2474 1358h6M2484 1344v5M2484 1354v6','#b0e2e5',2));

const O=pts([['E','18,925;45,900;55,840;70,740;85,750;105,800;120,820;130,780;150,810;185,820;210,870;240,850;262,835;285,855;305,800;330,840;350,820;380,830;400,865;430,860;470,860;490,890;520,920;560,940;590,905;630,900;660,920;710,905;760,920;800,925;840,940;880,940;920,930;960,905;990,920;1015,935;1024,930;1028,820;1070,820;1090,850;1112,900;1120,845;1155,850;1175,880;1200,840;1240,850;1270,880;1290,855;1325,900;1350,870;1385,850;1410,880;1450,860;1490,900;1540,920;1550,928'],['F','0,935;40,915;95,955;110,935;160,955;200,965;350,968;365,940;405,890;430,845;450,860;465,810;485,830;510,895;520,860;550,885;560,840;600,850;610,830;665,915;680,850;715,885;740,860;800,890;860,920;900,940;955,950;970,945;1020,970;1030,955;1075,960;1095,915;1140,915;1180,935;1210,925;1285,950;1320,930;1345,840;1375,890;1395,905;1415,890;1420,830;1450,830;1465,820;1480,855;1490,840']]);
const U=pts([['E','18,890;30,890;45,850;60,870;90,865;105,820;115,765;130,780;160,830;195,880;220,820;250,820;280,820;290,780;320,785;350,850;390,870;420,900;470,885;500,915;520,890;560,930;570,940;600,935;630,890;670,935;720,930;760,915;795,945;840,940;880,945;910,925;940,935;960,920;1000,925;1025,900;1040,880;1110,885;1120,905;1155,895;1180,845;1200,885;1240,840;1270,845;1320,880;1350,855;1380,900;1420,940;1470,935;1540,955;1550,940'],['F','0,935;30,910;60,895;100,900;140,925;200,940;240,945;300,935;340,945;375,915;400,910;405,855;430,850;450,870;475,890;500,835;520,835;540,840;550,705;570,770;600,800;612,830;640,790;665,770;700,800;730,850;800,880;870,895;930,925;960,935;975,890;1000,905;1040,895;1075,915;1085,950;1130,940;1200,945;1260,970;1290,960;1320,930;1340,950;1360,900;1382,845;1405,890;1430,890;1440,800;1455,810;1470,780;1490,830']]);
let fg='',fr='',ub='',ug='',oo='',or='';
for(let x=11;x<=1815;x+=2){const o=at(O,x),u=at(U,x),po=at(O,x-4),pu=at(U,x-4);const j=Math.round(rnd()*3);
if(u<o)fg+=`M${x} ${Math.round(u)}V${Math.round(o)}`;else fr+=`M${x} ${Math.round(o)}V${Math.round(u)}`;
const su=`M${x} ${Math.round(u)-4-j}v${8+j}`,so=`M${x} ${Math.round(o)-4-j}v${9+j}`;
if(pu-u>6)ug+=su;else ub+=su;if(po-o>5)or+=so;else oo+=so}
put('bsp',10,1368,'<g shape-rendering="crispEdges">'+line(fg,'#0a640a',2)+line(fr,'#800000',2)+line(ub,'#0a22ff',2)+line(ug,'#0a8010',2)+line(oo,'#ffa028',2)+line(or,'#ff1020',2)+'<path d="M10 1456l9 12h-9z" fill="#708090"/></g>'+txt(17,1391,'bsp o1 M5 Buy press of EMA Sell press of EMA (35 35) 0.0001 0.0001 0.0001 0.0001'));
put('ax5',2466,1366,txt(2471,1387,'0.0002')+txt(2471,1461,'0')+line('M2466 1371h3M2466 1467h3','#000',2));
put('time',4,1470,['2 Mar 2023','2 Mar 15:00','2 Mar 20:20','3 Mar 01:40','3 Mar 07:00','3 Mar 12:20','3 Mar 17:40','3 Mar 23:00','6 Mar 04:20','6 Mar 09:40','6 Mar 15:00','6 Mar 20:20','7 Mar 01:40','7 Mar 07:00','7 Mar 12:20'].map((s,i)=>line(`M${11+128*i} 1470v6`,'#000',2)+txt(7+128*i,1493,s)).join(''));
let c='';for(let i=0;i<8;i++){const h=6+i*2;c+=`<rect x="${i*6}" y="${26-h}" width="4" height="${h}" fill="#0a3c50"/><rect x="${i*6}" width="4" height="${24-h-2}" fill="#5a7010"/>`}
document.getElementById('conn').innerHTML=c;
</script>
</body>
</html>
